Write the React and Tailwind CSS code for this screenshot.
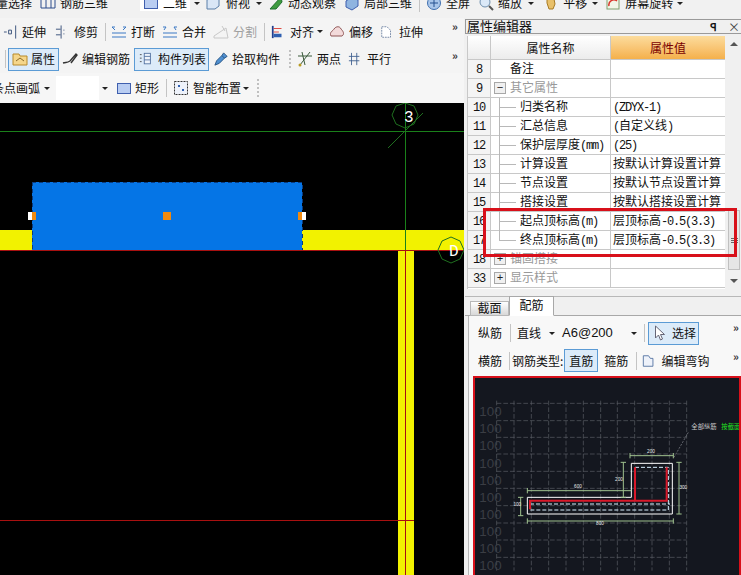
const cjk = { fontFamily: "'Noto Sans CJK SC', 'Liberation Sans', sans-serif" };
const mono = { fontFamily: "'Liberation Mono', 'Noto Sans CJK SC', monospace" };

// small drop-down triangle
const Caret = ({ className = '' }) => (
  <span className={`w-0 h-0 border-x-[3px] border-x-transparent border-t-[3px] border-t-[#222] ${className}`} />
);
const Sep = ({ className = '' }) => <span className={`w-px h-[18px] bg-[#c4c4c4] shrink-0 ${className}`} />;
const Grip = ({ className = '' }) => (
  <span className={`h-[18px] border-l-2 border-dotted border-[#c0c0c0] shrink-0 ${className}`} />
);
const More = ({ className = '' }) => <span className={`text-[11px] font-bold leading-none text-[#333] ${className}`}>»</span>;

const Ico = ({ children, w = 16 }) => (
  <svg width={w} height="16" viewBox="0 0 16 16" className="shrink-0" fill="none">
    {children}
  </svg>
);

const BlueBox = () => (
  <Ico>
    <rect x="1.5" y="3.5" width="13" height="10" fill="#b9cdf2" stroke="#3f5fae" />
  </Ico>
);

// one toolbar entry: icon + label, optional caret
const Item = ({ icon, label, caret, gray, className = '', gap = 'gap-[4px]' }) => (
  <div className={`flex items-center shrink-0 ${gap} ${className}`}>
    {icon}
    {label && <span className={`text-[12px] leading-4 whitespace-nowrap ${gray ? 'text-[#a0a0a0]' : 'text-[#111]'}`}>{label}</span>}
    {caret && <Caret className="ml-[2px]" />}
  </div>
);

const ToolBtn = ({ children, className = '' }) => (
  <div className={`flex items-center shrink-0 border border-[#5b9bd5] bg-[#dcebf9] ${className}`}>{children}</div>
);

// latin runs are half a CJK cell wide in the grid font, so squeeze them to 6px
const Cell = ({ text }) =>
  (text || '').split(/([\x20-\x7e]+)/).map((part, i) =>
    i % 2 ? (
      <span key={i} className="tracking-[-1.2px]">{part}</span>
    ) : (
      part
    )
  );

function TopRow() {
  return (
    <div className="h-[18px] overflow-hidden bg-[#f1f1f1] shrink-0">
      <div className="flex items-center h-4 -mt-[5px] -ml-[4px]">
        <Item label="量选择" />
        <Item
          className="ml-[8px]"
          icon={<Ico><path d="M1 3h14v10H1zM6 3v10M11 3v10" stroke="#2c4c8c" /></Ico>}
          label="钢筋三维"
        />
        <div className="flex items-center ml-[32px] bg-white h-4 pl-[3px] pr-[3px] gap-[4px]">
          <BlueBox />
          <span className="text-[12px] leading-4">二维</span>
        </div>
        <Caret className="ml-[4px]" />
        <Item
          className="ml-[5px]"
          gap="gap-[5px]"
          icon={<Ico><path d="M2 5l4-3h8v9l-4 3H2z" fill="#d9e6f6" stroke="#5b7fa8" /></Ico>}
          label="俯视"
        />
        <Caret className="ml-[6px]" />
        <Item
          className="ml-[6px]"
          icon={<Ico><path d="M2 14L13 2l1 5-6 7z" fill="#3f9b3f" stroke="#1f6f2f" /></Ico>}
          label="动态观察"
        />
        <Item
          className="ml-[8px]"
          icon={<Ico><path d="M2 6l6-4 6 3v6l-6 4-6-3z" fill="#8fb4e0" stroke="#3f5fae" /></Ico>}
          label="局部三维"
        />
        <Sep className="ml-[7px]" />
        <Item
          className="ml-[6px]"
          icon={<Ico><circle cx="8" cy="8" r="6.5" fill="#a9c6ea" stroke="#3f6fae" /><path d="M8 4v8M4 8h8" stroke="#24508f" /></Ico>}
          label="全屏"
        />
        <Item
          className="ml-[8px]"
          icon={<Ico><circle cx="7" cy="7" r="5" fill="#dbe9f8" stroke="#6f8fae" /><path d="M11 11l4 4" stroke="#555" strokeWidth="2" /></Ico>}
          label="缩放"
        />
        <Caret className="ml-[6px]" />
        <Item
          className="ml-[9px]"
          icon={<Ico><path d="M4 8V4l2-2 2 1 3 1 1 5-2 5H6z" fill="#e8c06a" stroke="#a87a22" /></Ico>}
          label="平移"
        />
        <Caret className="ml-[5px]" />
        <Item
          className="ml-[7px]"
          icon={<Ico><rect x="2" y="2" width="12" height="12" fill="#f2f6e8" stroke="#7f9f6f" /><path d="M4 11a5 5 0 0 1 8-5" stroke="#d9342a" strokeWidth="1.5" /></Ico>}
          label="屏幕旋转"
        />
        <Caret className="ml-[4px]" />
      </div>
    </div>
  );
}

function LeftToolbars() {
  return (
    <div className="shrink-0 bg-[#f4f4f4]">
      <div className="h-[27px] flex items-center relative pl-[3px]">
        <Item
          icon={<Ico w={15}><path d="M1 8h3M6 6h3v4H6zM13.5 1v14" stroke="#38507a" /></Ico>}
          label="延伸"
        />
        <Item
          className="ml-[9px]"
          icon={<Ico w={15}><path d="M1 5h5M1 11h5M6.5 1v14M9 6h1M9 10h1" stroke="#38507a" /></Ico>}
          label="修剪"
        />
        <Sep className="ml-[7px]" />
        <Item
          className="ml-[5px]"
          icon={<Ico><path d="M1 13h14M1 9h14M4 3H1l3 3M12 3h3l-3 3" stroke="#3b78c4" /></Ico>}
          label="打断"
        />
        <Item
          className="ml-[7px]"
          icon={<Ico><path d="M1 13h14M1 9h14M1 3h3l-2 3M15 3h-3l2 3" stroke="#3b78c4" /></Ico>}
          label="合并"
        />
        <Item
          className="ml-[7px]"
          gray
          icon={<Ico><path d="M1 14h14L13 4l-12 8zM9 2l3 5" stroke="#c8c8c8" /></Ico>}
          label="分割"
        />
        <Sep className="ml-[7px]" />
        <Item
          className="ml-[6px]"
          gap="gap-[5px]"
          icon={<Ico w={14}><path d="M2 1v14" stroke="#1f3f8f" strokeWidth="2" /><path d="M3 4h9M3 8h6" stroke="#d9342a" /><rect x="3" y="10" width="9" height="4" fill="#2f5fb0" /></Ico>}
          label="对齐"
        />
        <Caret className="ml-[3px]" />
        <Item
          className="ml-[6px]"
          icon={<Ico><path d="M2 12c-2-4 2-5 3-7 2-3 6-3 7 0 2 2 4 5 1 7z" fill="#f3dada" stroke="#8f5555" /></Ico>}
          label="偏移"
        />
        <Item
          className="ml-[7px]"
          gap="gap-[5px]"
          icon={<Ico w={14}><path d="M2 2h6l4 4v8H2z" fill="#fff" stroke="#6a7f9f" strokeDasharray="2 1" /></Ico>}
          label="拉伸"
        />
        <More className="absolute left-[452px] top-[3px]" />
      </div>
      <div className="h-[28px] flex items-center relative pl-[5px]">
        <Sep />
        <ToolBtn className="ml-[2px] w-[51px] h-[23px] pl-[3px] gap-[3px]">
          <Ico><path d="M1 3h6l1 2h7v9H1z" fill="#f5d68a" stroke="#b88a2a" /><path d="M4 10l4-3 4 3" stroke="#8a6a2a" /></Ico>
          <span className="text-[12px]">属性</span>
        </ToolBtn>
        <Item
          className="ml-[3px]"
          icon={<Ico><path d="M1 12c3-1 4 0 7-2l6-7 1 1-6 8" stroke="#333" strokeWidth="1.4" /></Ico>}
          label="编辑钢筋"
        />
        <ToolBtn className="ml-[4px] w-[75px] h-[23px] pl-[4px] gap-[5px]">
          <Ico w={14}><path d="M1 3h2M1 7h2M1 11h2" stroke="#444" /><rect x="6" y="1.5" width="7" height="12" fill="#eef4fb" stroke="#4f6f9f" /><path d="M6 5h7M6 9h7" stroke="#4f6f9f" /></Ico>
          <span className="text-[12px]">构件列表</span>
        </ToolBtn>
        <Item
          className="ml-[5px]"
          icon={<Ico w={14}><path d="M1 15l2-5 6-6 3 3-6 6zM9 4l2-3 4 4-3 2" fill="#4f8fd0" stroke="#23507f" /></Ico>}
          label="拾取构件"
        />
        <Grip className="ml-[9px]" />
        <Item
          className="ml-[6px]"
          icon={<Ico><path d="M1 5h14M3 14L13 1M5 1l3 13" stroke="#3a5a3a" /><circle cx="3" cy="14" r="1.5" fill="#b89a20" /></Ico>}
          label="两点"
        />
        <Item
          className="ml-[7px]"
          gap="gap-[5px]"
          icon={<Ico w={14}><path d="M1 5h12M1 10h12M4 1v14M10 1v14" stroke="#3f5f8f" /></Ico>}
          label="平行"
        />
        <More className="absolute left-[452px] top-[5px]" />
      </div>
      <div className="h-[30px] flex items-center bg-[#f6f6f6]">
        <span className="text-[12px] -ml-[8px] whitespace-nowrap">条点画弧</span>
        <Caret className="ml-[4px]" />
        <div className="w-[43px] h-[24px] bg-white ml-[6px]" />
        <Caret className="ml-[3px]" />
        <Item className="ml-[8px]" gap="gap-[3px]" icon={<BlueBox />} label="矩形" />
        <Sep className="ml-[7px]" />
        <Item
          className="ml-[6px]"
          gap="gap-[4px]"
          icon={<Ico><rect x="1.5" y="1.5" width="13" height="13" fill="#eef2fa" stroke="#333" strokeDasharray="2 1" /><path d="M5 5h2v2H5zM9 9h2v2H9z" fill="#2f5fb0" /></Ico>}
          label="智能布置"
        />
        <Caret className="ml-[2px]" />
        <Grip className="ml-[8px]" />
      </div>
    </div>
  );
}

function Canvas() {
  return (
    <svg viewBox="0 0 464 472" className="block w-[464px] h-[472px] bg-black" shapeRendering="crispEdges">
      {/* coordinates: y = screen y - 103 */}
      <rect x="0" y="127" width="464" height="20" fill="#f2f200" />
      <rect x="398" y="147" width="16" height="325" fill="#f2f200" />
      <rect x="32" y="79" width="270" height="68" fill="#0575e6" />
      <rect x="32" y="79" width="270" height="68" fill="none" stroke="#0a3c80" strokeDasharray="4 3" />
      <path d="M0 28.5H464M405.5 0V147" stroke="#1a801a" fill="none" />
      <path d="M0 147.5H464M0 417.5H398M405.5 147V472" stroke="#a81010" fill="none" />
      <path d="M398 417.5H414" stroke="#a81010" />
      <g shapeRendering="auto" fill="none" stroke="#1f6f1f">
        <path d="M388 45L423 10" />
        <polygon points="405,0 414,3 418,12 414,21 405,25 396,21 392,12 396,3" />
        <polygon points="451,134 460,138 464,147 460,156 451,160 442,156 438,147 442,138" />
      </g>
      <text x="404" y="19" fill="#fff" fontSize="16" fontFamily="'Liberation Mono', monospace">3</text>
      <text x="449" y="153" fill="#fff" fontSize="16" fontFamily="'Liberation Mono', monospace">D</text>
      <rect x="28" y="109" width="8" height="8" fill="#fff" />
      <rect x="32" y="109" width="4" height="8" fill="#f08a10" />
      <rect x="163" y="109" width="8" height="8" fill="#f08a10" />
      <rect x="298" y="109" width="8" height="8" fill="#fff" />
      <rect x="298" y="109" width="4" height="8" fill="#f08a10" />
    </svg>
  );
}

const rows = [
  { n: '8', name: '备注', indent: 'root' },
  { n: '9', name: '其它属性', box: '−', gray: true },
  { n: '10', name: '归类名称', val: '(ZDYX-1)', leaf: true },
  { n: '11', name: '汇总信息', val: '(自定义线)', leaf: true },
  { n: '12', name: '保护层厚度(mm)', val: '(25)', leaf: true },
  { n: '13', name: '计算设置', val: '按默认计算设置计算', leaf: true },
  { n: '14', name: '节点设置', val: '按默认节点设置计算', leaf: true },
  { n: '15', name: '搭接设置', val: '按默认搭接设置计算', leaf: true },
  { n: '16', name: '起点顶标高(m)', val: '层顶标高-0.5(3.3)', leaf: true },
  { n: '17', name: '终点顶标高(m)', val: '层顶标高-0.5(3.3)', leaf: true, last: true },
  { n: '18', name: '锚固搭接', box: '+', gray: true },
  { n: '33', name: '显示样式', box: '+', gray: true },
];

function PropRow({ row }) {
  return (
    <div className="flex h-[19px] border-b border-[#c8c8c8] text-[12px] leading-[21px] text-[#111]">
      <div className="w-[23px] shrink-0 text-center bg-[#f4f4f4] border-r border-[#c8c8c8]">
        <Cell text={row.n} />
      </div>
      <div className="w-[120px] shrink-0 relative border-r border-[#c8c8c8] whitespace-nowrap">
        {row.box && (
          <span className="absolute left-[3px] top-[3px] w-[12px] h-[12px] border border-[#a8a8a8] bg-[#f0f0f0] flex items-center justify-center text-[11px] leading-none text-[#222]">
            {row.box}
          </span>
        )}
        {row.leaf && (
          <>
            <span className={`absolute left-[8px] top-0 w-px bg-[#b8b8b8] ${row.last ? 'h-[9px]' : 'h-[19px]'}`} />
            <span className="absolute left-[8px] top-[9px] w-[17px] h-px bg-[#b8b8b8]" />
          </>
        )}
        <span className={`absolute top-0 ${row.leaf ? 'left-[29px]' : 'left-[19px]'} ${row.gray ? 'text-[#999]' : ''}`}>
          <Cell text={row.name} />
        </span>
      </div>
      <div className="flex-1 pl-[2px] whitespace-nowrap">
        <Cell text={row.val} />
      </div>
    </div>
  );
}

function PropGrid() {
  return (
    <div className="flex ml-[2px] h-[253px] shrink-0">
      <div className="w-[258px] shrink-0 border-l border-[#c8c8c8] bg-white">
        <div className="flex h-[24px] border-b border-[#c8c8c8] text-[12px] leading-[23px] text-center">
          <div className="w-[23px] shrink-0 bg-gradient-to-b from-white to-[#ececec] border-r border-[#c8c8c8]" />
          <div className="w-[120px] shrink-0 bg-gradient-to-b from-white to-[#ececec] border-r border-[#c8c8c8]">属性名称</div>
          <div className="flex-1 bg-gradient-to-b from-[#fcdc9c] to-[#f4b04a] text-[#7a0000]">属性值</div>
        </div>
        <div style={mono}>
          {rows.map((r) => (
            <PropRow key={r.n} row={r} />
          ))}
        </div>
      </div>
      {/* scrollbar */}
      <div className="flex-1 bg-[#f0f0f0] flex flex-col items-center pl-[2px] relative">
        <span className="mt-[6px] w-0 h-0 border-x-[4px] border-x-transparent border-b-[4px] border-b-[#555]" />
        <div className="absolute left-[3px] top-[174px] w-[12px] h-[60px] bg-[#e6e6e6] border border-[#c0c0c0] flex flex-col items-center justify-center gap-[1px]">
          <span className="w-[7px] h-px bg-[#666]" />
          <span className="w-[7px] h-px bg-[#666]" />
          <span className="w-[7px] h-px bg-[#666]" />
        </div>
        <span className="mt-auto mb-[6px] w-0 h-0 border-x-[4px] border-x-transparent border-t-[4px] border-t-[#555]" />
      </div>
    </div>
  );
}

function Diagram() {
  const hs = [88, 140, 190, 240, 292, 343, 395, 447, 498, 550];
  const vs = [80, 132, 184, 236, 288, 340, 392, 442, 494, 546, 598, 650];
  const labels = [112, 163, 215, 268, 318, 370, 420, 472, 522, 575];
  return (
    <div className="ml-[4px] h-[204px] border-2 border-[#d8101a] bg-[#14171f] overflow-hidden">
      <svg viewBox="15 12 792 588" className="block w-[264px] h-[196px]" fill="none">
        {hs.map((y) => (
          <path key={y} d={`M80 ${y}H650`} stroke="#5c5f66" strokeWidth="2" strokeDasharray="14 6" />
        ))}
        {vs.map((x) => (
          <path key={x} d={`M${x} 80V590`} stroke="#5c5f66" strokeWidth="2" strokeDasharray="14 6" />
        ))}
        {labels.map((y) => (
          <text key={y} x="28" y={y + 14} fontSize="40" fill="#3a3d44" fontFamily="'Liberation Sans', sans-serif">100</text>
        ))}
        <path d="M172 370H484V268H607V420H172Z" stroke="#fff" strokeWidth="3" />
        <path d="M495 280H595V408H180M180 390H600" stroke="#d8f0ff" strokeWidth="3" strokeDasharray="12 6" />
        <path d="M180 406V380H590V280M495 380V280" stroke="#d8182a" strokeWidth="6" />
        <path
          d="M172 350H484M172 342V358M460 265V370M452 265H468M452 370H468M480 245H610M480 237V253M610 237V253M627 265V420M619 265H635M619 420H635M152 370V425M144 370H160M144 425H160M172 441H610M172 433V449M610 433V449"
          stroke="#9fc28f"
          strokeWidth="3"
        />
        <path d="M612 250L655 175" stroke="#8a8d94" strokeWidth="2" strokeDasharray="6 4" />
        <g fontSize="14" fontFamily="'Liberation Sans', sans-serif" fill="#e8e8e8" textAnchor="middle">
          <text x="324" y="343">600</text>
          <text x="543" y="237">200</text>
          <text x="447" y="321">200</text>
          <text x="640" y="345">300</text>
          <text x="142" y="396">100</text>
          <text x="390" y="453">800</text>
        </g>
        <text x="664" y="164" fontSize="19" fill="#c8c8c8" style={cjk}>全部纵筋</text>
        <text x="754" y="164" fontSize="19" fill="#22e022" style={cjk}>按截面</text>
      </svg>
    </div>
  );
}

function RebarPanel() {
  return (
    <div className="flex-1 min-h-0 flex flex-col">
      <div className="h-[8px] border-b border-[#b8b8b8] shrink-0" />
      <div className="flex h-[19px] items-end pl-[5px] border-b border-[#a8a8a8] shrink-0">
        <div className="w-[39px] h-[15px] -mb-px border border-[#b8b8b8] bg-gradient-to-b from-white to-[#d8d8d8] text-[12px] leading-[12px] text-center">截面</div>
        <div className="w-[45px] h-[20px] -mb-px border border-[#a8a8a8] border-b-white bg-white text-[12px] leading-[16px] text-center">配筋</div>
      </div>
      <div className="flex-1 min-h-0 ml-[3px] border-l border-[#b8b8b8] bg-[#f8f8f8] overflow-hidden">
        <div className="h-[31px] flex items-center pl-[9px] pt-[3px] relative text-[12px]">
          <span>纵筋</span>
          <Sep className="ml-[8px]" />
          <span className="ml-[6px]">直线</span>
          <Caret className="ml-[8px]" />
          <span className="ml-[7px] text-[13px] w-[56px]" style={{ fontFamily: "'Liberation Sans', sans-serif" }}>A6@200</span>
          <Caret className="ml-[13px]" />
          <Sep className="ml-[7px]" />
          <ToolBtn className="ml-[3px] w-[51px] h-[23px] pl-[5px] gap-[6px]">
            <svg width="12" height="17" viewBox="0 0 12 17" fill="#fff" stroke="#667">
              <path d="M1.5 1v12l3-3 2 5 2-1-2-4.5h4z" />
            </svg>
            <span>选择</span>
          </ToolBtn>
          <More className="absolute left-[264px] top-[6px]" />
        </div>
        <div className="h-[29px] flex items-center pl-[9px] pb-[2px] relative text-[12px]">
          <span>横筋</span>
          <Sep className="ml-[7px]" />
          <span className="ml-[2px] whitespace-nowrap">钢筋类型:</span>
          <ToolBtn className="ml-[1px] w-[34px] h-[23px] justify-center">直筋</ToolBtn>
          <span className="ml-[6px]">箍筋</span>
          <Sep className="ml-[8px]" />
          <span className="ml-[5px]">
            <Ico w={14}><path d="M1.5 2h6l2 3h3v9h-11z" fill="#eef2fa" stroke="#4f6f9f" /></Ico>
          </span>
          <span className="ml-[5px]">编辑弯钩</span>
          <More className="absolute left-[264px] top-[4px]" />
        </div>
        <Diagram />
      </div>
    </div>
  );
}

export default function App() {
  return (
    <div className="relative w-[741px] h-[575px] overflow-hidden flex flex-col bg-[#f0f0f0] text-[#111]" style={cjk}>
      <TopRow />
      <div className="flex flex-1 min-h-0">
        <div className="w-[464px] shrink-0 flex flex-col">
          <LeftToolbars />
          <Canvas />
        </div>
        <div className="flex-1 min-w-0 flex flex-col pl-[1px]">
          <div className="h-[15px] mt-[1px] border border-[#9a9a9a] border-r-0 flex items-center shrink-0 overflow-hidden">
            <span className="text-[13px] leading-none pl-[1px] -mt-[3px]">属性编辑器</span>
            <span className="ml-auto text-[11px] font-bold leading-none mr-[11px]">ꟼ</span>
            <span className="text-[12px] leading-none mr-[1px] text-[#444]">×</span>
          </div>
          <div className="h-[2px] shrink-0" />
          <PropGrid />
          <RebarPanel />
        </div>
      </div>
      {/* red note drawn over the property rows */}
      <div className="absolute left-[483px] top-[208px] w-[254px] h-[49px] border-[3px] border-[#d8101a] pointer-events-none" />
    </div>
  );
}
